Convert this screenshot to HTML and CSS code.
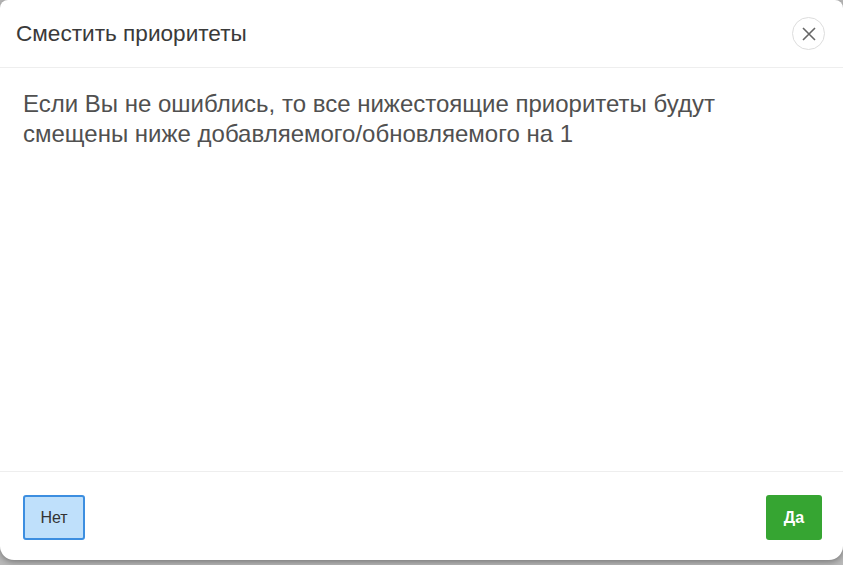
FILE: index.html
```html
<!DOCTYPE html>
<html>

<head>
    <meta http-equiv="Content-Type" content="text/html; charset=utf-8" />
    <title>Сместить приоритеты</title>
    <link rel="stylesheet" href="styles.css">
</head>

<body>
    <div class="modal">
        <div class="modal-header">
            <div class="modal-title">Сместить приоритеты</div>
            <div class="close">
                <svg width="16" height="16" viewBox="0 0 16 16">
                    <path d="M2 2 L14 14 M14 2 L2 14" stroke="#666" stroke-width="1.6" fill="none" />
                </svg>
            </div>
        </div>
        <div class="modal-body">
            Если Вы не ошиблись, то все нижестоящие приоритеты будут смещены ниже добавляемого/обновляемого на 1
        </div>
        <div class="modal-footer">
            <div class="btn no">Нет</div>
            <div class="btn yes">Да</div>
        </div>
    </div>
</body>

</html>
```

FILE: styles.css
```css
html, body {
    margin: 0;
    height: 100%;
}

body {
    background: #b9b9b9;
    font-family: "Liberation Sans", Arial, sans-serif;
    overflow: hidden;
}

.modal {
    height: 560px;
    background: white;
    border-radius: 8px 8px 14px 14px;
    box-shadow: 0 2px 6px rgba(0, 0, 0, 0.35);
    display: flex;
    flex-direction: column;
}

.modal-header {
    height: 68px;
    box-sizing: border-box;
    padding: 0 18px 0 16px;
    border-bottom: 1px solid #eee;
    display: flex;
    align-items: center;
    justify-content: space-between;
}

.modal-title {
    font-size: 22.6px;
    color: #3a3a3a;
}

.close {
    width: 31px;
    height: 31px;
    border: 1px solid #ddd;
    border-radius: 50%;
    display: flex;
    align-items: center;
    justify-content: center;
}

.modal-body {
    flex: 1;
    padding: 21px 23px;
    font-size: 24px;
    line-height: 30px;
    color: #505050;
}

.modal-footer {
    height: 89px;
    box-sizing: border-box;
    border-top: 1px solid #eee;
    padding: 23px 21px 0 23px;
    display: flex;
    justify-content: space-between;
    align-items: flex-start;
}

.btn {
    height: 45px;
    box-sizing: border-box;
    border-radius: 3px;
    font-size: 16px;
    display: flex;
    align-items: center;
    justify-content: center;
    user-select: none;
}

.btn.no {
    width: 62px;
    background: #bfe0fb;
    border: 2px solid #3c8ee0;
    color: #333;
}

.btn.yes {
    width: 56px;
    background: #36a532;
    color: white;
    font-weight: bold;
}
```
